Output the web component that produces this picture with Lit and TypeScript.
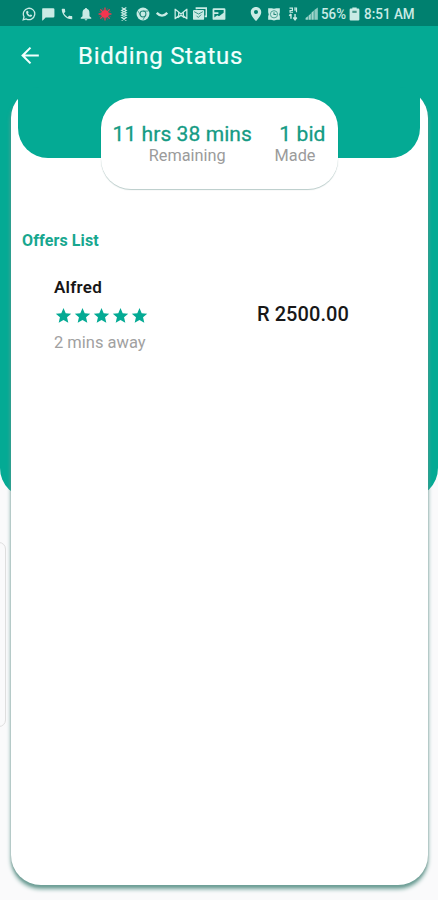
import { LitElement, html, svg, css } from "lit";
import { customElement, property } from "lit/decorators.js";

const glyphs: Record<string, unknown> = {
  whatsapp: svg`<path d="M2 22l1.500-5.300A9.800 9.800 0 1 1 7.300 20.500z" fill="none" stroke="currentColor" stroke-width="2.200"/><path d="M8.500 6.500l1.800.2 1 2.700-1.200 1.500c.8 1.500 1.700 2.400 3.200 3.100l1.300-1.300 2.700 1.200c.1 2-1 3-2.800 3-3.500-.4-7.300-4-7.500-7.600 0-1.400.5-2.200 1.500-2.800z" fill="currentColor"/>`,
  chat: svg`<path d="M3 2h18q2 0 2 2v12q0 2-2 2H8l-5 5H2V4q0-2 1-2z" fill="currentColor"/>`,
  phone: svg`<path d="M6.620 10.790a15.150 15.150 0 0 0 6.590 6.590l2.200-2.200a1 1 0 0 1 1.020-.24c1.120.37 2.330.57 3.570.57a1 1 0 0 1 1 1V20a1 1 0 0 1-1 1C10.610 21 3 13.390 3 4a1 1 0 0 1 1-1h3.500a1 1 0 0 1 1 1c0 1.250.2 2.450.57 3.570a1 1 0 0 1-.25 1.020z" fill="currentColor"/>`,
  bell: svg`<path d="M12 1.500a2 2 0 0 1 2 2C17 4.500 18 7 18 11v5l3 2.500V20H3v-1.500L6 16v-5c0-4 1-6.500 4-7.500a2 2 0 0 1 2-2zM9.500 21h5q-.5 2-2.500 2t-2.500-2z" fill="currentColor"/>`,
  burst: svg`<path d="M12 1v22M1 12h22M4 4l16 16M20 4L4 20" stroke="currentColor" stroke-width="2.200"/><path d="M7.500 2l9 20M2 16.500l20-9M16.500 2l-9 20M2 7.500l20 9" stroke="currentColor" stroke-width="1" opacity=".6"/><circle cx="12" cy="12" r="6.500" fill="currentColor"/>`,
  strand: svg`<path d="M8 1l8 5-8 4 8 4-8 4 8 5M16 1L8 6l8 4-8 4 8 4-8 5" fill="none" stroke="currentColor" stroke-width="1.900"/>`,
  chrome: svg`<circle cx="12" cy="12" r="11" fill="currentColor"/><circle cx="12" cy="12" r="5" fill="none" stroke="#26897b" stroke-width="1.800"/><path d="M12 7h9M7.800 14.500L3.500 7M16.200 14.500L12 22" stroke="#26897b" stroke-width="1.300"/>`,
  smile: svg`<path d="M3 10q9 9.500 18 0" fill="none" stroke="currentColor" stroke-width="4"/>`,
  bowtie: svg`<path d="M2 3v18M22 3v18M2 4l10 8 10-8M2 20l6-5M22 20l-6-5M8 9v8l4-3 4 3V9" fill="none" stroke="currentColor" stroke-width="2.200"/>`,
  mail: svg`<path d="M6 4V2h17v14h-3" fill="none" stroke="currentColor" stroke-width="3"/><rect x="0" y="5" width="19" height="17" rx="2" fill="currentColor"/><path d="M2 8l7.500 4L17 8M6 15l3 3 5-5" fill="none" stroke="#26897b" stroke-width="1.500"/>`,
  picture: svg`<path fill-rule="evenodd" d="M3 2h18q2 0 2 2v16q0 2-2 2H3q-2 0-2-2V4q0-2 2-2zM4 5v4h7v3H4v6l5-4 3 2 8-6V5z" fill="currentColor"/>`,
  pin: svg`<path fill-rule="evenodd" d="M12 0C7 0 3 3.800 3 8.800 3 15 12 24 12 24s9-9 9-15.200C21 3.800 17 0 12 0zm0 5a3.500 3.500 0 1 1 0 7 3.500 3.500 0 0 1 0-7z" fill="currentColor"/>`,
  alarm: svg`<path d="M2 2h6l4 1 4-1h6v7l-1 4 1 3v6h-5l-5 1-5-1H2v-6l1-3-1-4z" fill="currentColor"/><circle cx="12" cy="12.500" r="6.200" fill="none" stroke="#4ba093" stroke-width="1.700"/><path d="M12 9v4h4" fill="none" stroke="#26897b" stroke-width="1.800"/>`,
  data: svg`<path d="M6 2h5v4H7v3h5M14 2h4v7M14 5h4" fill="none" stroke="currentColor" stroke-width="2"/><path d="M8.500 12v8M5.500 15l3-3M15.500 12v9M12.500 18l3 4 3-4" fill="none" stroke="currentColor" stroke-width="2.400"/>`,
  signal: svg`<path d="M1 22v-3l4-3v6zM6 22v-7l4-4v11zM11 22V10l4-4v16z" fill="currentColor" opacity=".8"/><path d="M16 22V5l6-4v21z" fill="currentColor" opacity=".7"/>`,
  battery: svg`<path d="M8 0h8v2h3q2 0 2 2v18q0 2-2 2H5q-2 0-2-2V4q0-2 2-2h3z" fill="currentColor"/><path d="M8 6h8v4H8z" fill="#46988b"/>`,
  back: svg`<path d="M21.500 12H3.500M12 3L3 12l9 9" fill="none" stroke="currentColor" stroke-width="2.400"/>`,
  star: svg`<path d="M12 1.500l3.100 7.200 7.800.7-5.900 5.100 1.800 7.700L12 18.200l-6.800 4 1.800-7.700L1.100 9.400l7.800-.7z" fill="currentColor"/>`,
};

@customElement("ui-glyph")
class UiGlyph extends LitElement {
  @property() name = "";
  static styles = css`
    :host { display: block; width: 14px; height: 14px; flex: none; }
    svg { display: block; width: 100%; height: 100%; }
  `;
  render() {
    return html`<svg viewBox="0 0 24 24" aria-hidden="true">${glyphs[this.name]}</svg>`;
  }
}

@customElement("app-root")
class AppRoot extends LitElement {
  static styles = css`
    :host {
      display: block;
      height: 900px;
      overflow: hidden;
      position: relative;
      background: #fafafb;
      font-family: Roboto, "Liberation Sans", sans-serif;
    }
    * { box-sizing: border-box; }
    .backdrop {
      position: absolute;
      inset: 0 0 auto;
      height: 498px;
      background: #04aa94;
      border-radius: 0 0 30px 30px;
    }
    .edge-panel {
      position: absolute;
      left: -10px;
      top: 542px;
      width: 16px;
      height: 185px;
      border: 1.500px solid #dedede;
      border-radius: 7px;
    }
    .screen { position: relative; display: flex; flex-direction: column; height: 900px; }
    .status {
      height: 26px;
      padding: 2px 20px 0 19px;
      background: #00806f;
      color: #c9ebe5;
      display: flex;
      align-items: center;
      font-size: 15.500px;
      font-weight: 500;
      white-space: nowrap;
    }
    .notices { display: grid; grid-template-columns: repeat(11, 19.050px); justify-items: center; }
    .device { display: grid; grid-template-columns: repeat(4, 18.600px); justify-items: center; margin-left: 18px; }
    .hot { color: #f5354f; }
    .percent, .clock { display: block; transform-origin: left center; }
    .percent { width: 26px; margin-left: .5px; transform: scaleX(.86); }
    .clock { transform: scaleX(.87); width: 52px; margin-left: 2.500px; }
    .cell { width: 13px; margin-left: 1px; }
    .bar { height: 61px; padding: 0 20px; display: flex; align-items: center; color: #f2fffd; }
    .back { width: 21px; height: 21px; margin-top: -2px; }
    .title { margin: -2px 0 0 37px; font-size: 24px; font-weight: 400; letter-spacing: .72px; line-height: 30px; -webkit-text-stroke: .2px currentColor; }
    .card {
      margin: 1px 10px 0 11px;
      height: 797px;
      border-radius: 30px;
      background: #fff;
      box-shadow: 0 4px 4px #6b9f96, 0 2px 2px rgba(0, 0, 0, .25);
    }
    .banner {
      height: 70px;
      margin: 0 8px 0 7px;
      padding-top: 10px;
      border-radius: 0 0 30px 30px;
      background: #04aa94;
      display: flex;
      justify-content: center;
    }
    .summary {
      width: 237px;
      height: 91px;
      flex: none;
      padding: 25px 12px 0;
      border-radius: 30px;
      background: #fff;
      box-shadow: 0 1px 1px rgba(0, 70, 60, .28);
      display: flex;
      justify-content: space-between;
      text-align: center;
      white-space: nowrap;
      color: #159b84;
      font-size: 21px;
      line-height: 22px;
    }
    .figure { letter-spacing: .08px; -webkit-text-stroke: .3px currentColor; }
    .made { text-align: right; }
    .caption { font-size: 16.300px; line-height: 21px; color: #9b9b9b; padding-left: 10px; }
    .made .caption { padding: 0 10px 0 0; }
    .heading { margin: 73px 0 0 11px; font-size: 16px; line-height: 20px; font-weight: 700; letter-spacing: .12px; color: #18a78f; }
    .offer { display: flex; align-items: center; margin: 25px 0 0 43px; width: 295px; justify-content: space-between; }
    .person { font-size: 17px; line-height: 22px; font-weight: 600; letter-spacing: .25px; color: #161616; }
    .stars { display: flex; gap: 2.200px; color: #04aa94; margin: 9px 0 9px .5px; }
    .star { width: 17px; height: 17px; }
    .distance { font-size: 16.500px; line-height: 20px; color: #a1a1a1; }
    .price { font-size: 20px; line-height: 24px; font-weight: 500; letter-spacing: .08px; color: #181818; margin-top: -1px; }
  `;

  render() {
    const notices = ["whatsapp", "chat", "phone", "bell", "burst", "strand", "chrome", "smile", "bowtie", "mail", "picture"];
    const device = ["pin", "alarm", "data", "signal"];
    return html`
      <div class="backdrop"></div>
      <div class="edge-panel"></div>
      <div class="screen">
        <div class="status">
          <div class="notices">
            ${notices.map((n) => html`<ui-glyph name=${n} class=${n === "burst" ? "hot" : ""}></ui-glyph>`)}
          </div>
          <div class="device">${device.map((n) => html`<ui-glyph name=${n}></ui-glyph>`)}</div>
          <span class="percent">56%</span>
          <ui-glyph class="cell" name="battery"></ui-glyph>
          <span class="clock">8:51 AM</span>
        </div>
        <header class="bar">
          <ui-glyph class="back" name="back"></ui-glyph>
          <h1 class="title">Bidding Status</h1>
        </header>
        <main class="card">
          <div class="banner">
            <section class="summary">
              <div><div class="figure">11 hrs 38 mins</div><div class="caption">Remaining</div></div>
              <div class="made"><div class="figure">1 bid</div><div class="caption">Made</div></div>
            </section>
          </div>
          <div class="heading">Offers List</div>
          <div class="offer">
            <div>
              <div class="person">Alfred</div>
              <div class="stars">${[1, 2, 3, 4, 5].map(() => html`<ui-glyph class="star" name="star"></ui-glyph>`)}</div>
              <div class="distance">2 mins away</div>
            </div>
            <div class="price">R 2500.00</div>
          </div>
        </main>
      </div>
    `;
  }
}
